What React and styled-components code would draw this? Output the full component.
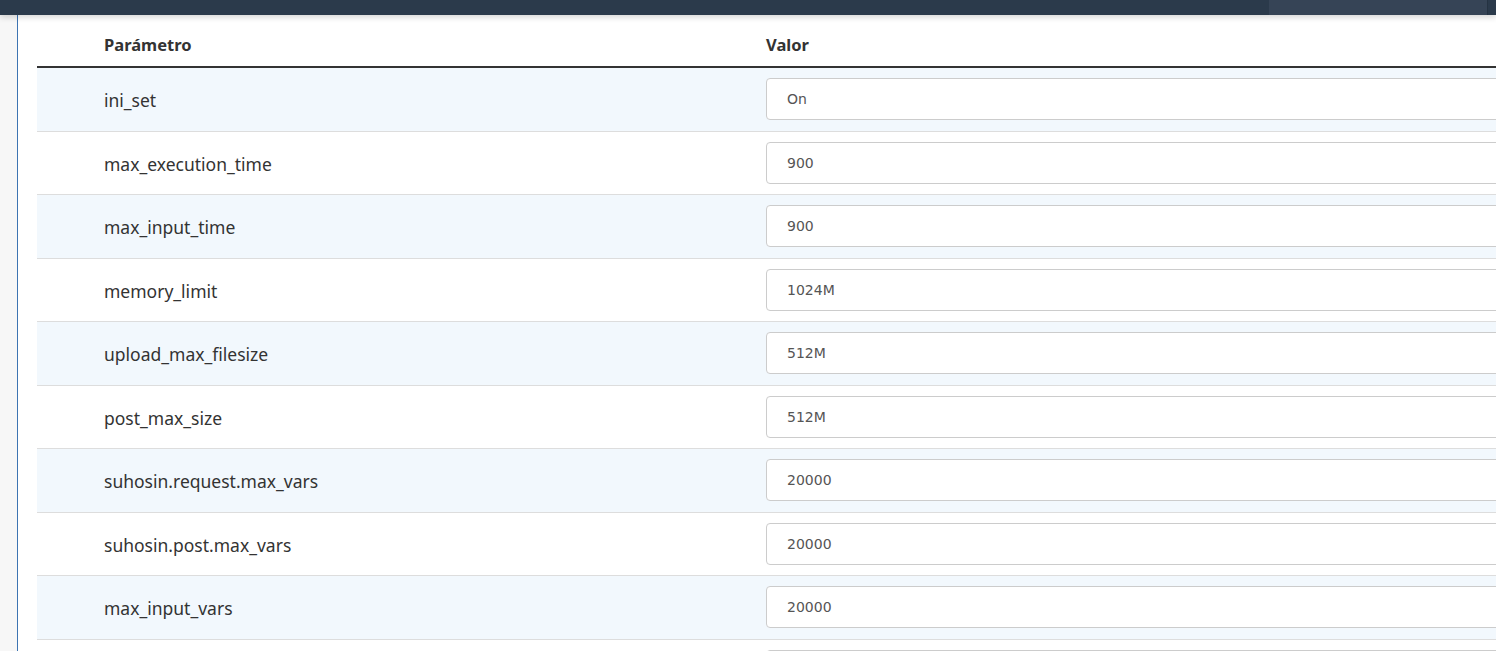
import React from "react";
import styled, { createGlobalStyle } from "styled-components";

const params = [
	["ini_set", "On"],
	["max_execution_time", "900"],
	["max_input_time", "900"],
	["memory_limit", "1024M"],
	["upload_max_filesize", "512M"],
	["post_max_size", "512M"],
	["suhosin.request.max_vars", "20000"],
	["suhosin.post.max_vars", "20000"],
	["max_input_vars", "20000"],
	["max_file_uploads", "20"],
];

const App = () => {
	return (
		<>
			<GlobalStyle />
			<Page>
				<TopBar>
					<TopSpacer />
					<TopTab />
					<TopEnd />
				</TopBar>
				<Body>
					<Sidebar />
					<Main>
						<Table>
							<HeaderRow>
								<HeadCell $first>Parámetro</HeadCell>
								<HeadCell>Valor</HeadCell>
							</HeaderRow>
							{params.map(([name, value], i) => (
								<Row key={name} $striped={i % 2 === 0}>
									<NameCell>{name}</NameCell>
									<ValueCell>
										<Input defaultValue={value} />
									</ValueCell>
								</Row>
							))}
						</Table>
					</Main>
				</Body>
			</Page>
		</>
	);
};

// # STYLED COMPONENTS

const GlobalStyle = createGlobalStyle`
	html, body {
		margin: 0;
		padding: 0;
		height: 100%;
		overflow: hidden;
		background: #fff;
	}
	body {
		font-family: "Noto Sans", "Open Sans", sans-serif;
		color: #333;
	}
`;

const Page = styled.div`
	display: flex;
	flex-direction: column;
	height: 100vh;
`;

const TopBar = styled.header`
	height: 15px;
	display: flex;
	background: #2b3a4b;
	box-shadow: 0 2px 6px rgba(0, 0, 0, 0.18);
	position: relative;
	z-index: 2;
	flex-shrink: 0;
`;

const TopSpacer = styled.div`
	flex: 1;
`;

const TopTab = styled.div`
	width: 218px;
	background: #364456;
	border-right: 1px solid #253342;
`;

const TopEnd = styled.div`
	width: 8px;
`;

const Body = styled.div`
	flex: 1;
	display: flex;
	min-height: 0;
`;

const Sidebar = styled.aside`
	width: 17px;
	background: #f7f7f7;
	border-right: 1px solid #3d74b2;
	flex-shrink: 0;
`;

const Main = styled.main`
	flex: 1;
	padding-left: 19px;
	overflow: hidden;
`;

const Table = styled.div`
	width: 1560px;
`;

const HeaderRow = styled.div`
	display: grid;
	grid-template-columns: 729px 1fr;
	height: 51px;
	align-items: center;
	border-bottom: 2px solid #333;
`;

const HeadCell = styled.div`
	font-weight: 700;
	font-size: 16.5px;
	padding-left: ${(p) => (p.$first ? "67px" : "0")};
	padding-top: 7px;
`;

const Row = styled.div`
	display: grid;
	grid-template-columns: 729px 1fr;
	align-items: center;
	height: 62.5px;
	border-bottom: 1px solid #dddddd;
	background: ${(p) => (p.$striped ? "#f2f8fd" : "#fff")};
`;

const NameCell = styled.div`
	font-size: 17.5px;
	padding-left: 67px;
	padding-top: 2px;
`;

const ValueCell = styled.div`
	display: flex;
	align-items: center;
`;

const Input = styled.input`
	width: 100%;
	height: 42px;
	box-sizing: border-box;
	border: 1px solid #cccccc;
	border-radius: 4px;
	padding: 0 20px;
	font-family: "DejaVu Sans", Verdana, sans-serif;
	font-size: 14px;
	color: #555;
	background: #fff;
	outline: none;
`;

export default App;
